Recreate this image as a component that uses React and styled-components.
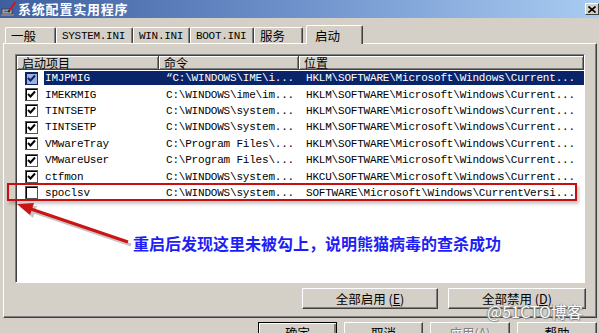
import React from "react";
import styled, { createGlobalStyle } from "styled-components";

const GlobalStyle = createGlobalStyle`
  html, body {
    margin: 0;
    padding: 0;
    background: #d4d0c8;
    overflow: hidden;
  }
  body {
    font-family: "Noto Sans CJK SC", "Liberation Sans", sans-serif;
  }
`;

const tabs = [
  { label: "一般", width: 51, mono: false },
  { label: "SYSTEM.INI", width: 77, mono: true },
  { label: "WIN.INI", width: 57, mono: true },
  { label: "BOOT.INI", width: 64, mono: true },
  { label: "服务", width: 49, mono: false },
  { label: "启动", width: 57, mono: false, active: true },
];

const HKLM = "HKLM\\SOFTWARE\\Microsoft\\Windows\\Current...";

const rows = [
  { name: "IMJPMIG", cmd: "\u201CC:\\WINDOWS\\IME\\i...", loc: HKLM, checked: true, selected: true },
  { name: "IMEKRMIG", cmd: "C:\\WINDOWS\\ime\\im...", loc: HKLM, checked: true },
  { name: "TINTSETP", cmd: "C:\\WINDOWS\\system...", loc: HKLM, checked: true },
  { name: "TINTSETP", cmd: "C:\\WINDOWS\\system...", loc: HKLM, checked: true },
  { name: "VMwareTray", cmd: "C:\\Program Files\\...", loc: HKLM, checked: true },
  { name: "VMwareUser", cmd: "C:\\Program Files\\...", loc: HKLM, checked: true },
  { name: "ctfmon", cmd: "C:\\WINDOWS\\system...", loc: "HKCU\\SOFTWARE\\Microsoft\\Windows\\Current...", checked: true },
  { name: "spoclsv", cmd: "C:\\WINDOWS\\system...", loc: "SOFTWARE\\Microsoft\\Windows\\CurrentVersi...", checked: false },
];

const App = () => {
  return (
    <Window>
      <GlobalStyle />
      <TitleBar>
        <svg width="16" height="16" viewBox="0 0 16 16">
          <rect x="1" y="8" width="10" height="5" fill="#c0c0c0" stroke="#404040" strokeWidth="1" />
          <rect x="2.5" y="9.5" width="7" height="2" fill="#4a6a9a" />
          <rect x="0" y="13" width="13" height="2" fill="#808080" />
          <line x1="14.5" y1="1" x2="8" y2="10" stroke="#d01818" strokeWidth="2" />
          <line x1="8.4" y1="9.4" x2="7.4" y2="11" stroke="#202020" strokeWidth="1.5" />
        </svg>
        <Title>系统配置实用程序</Title>
        <CloseButton>
          <svg width="8" height="7" viewBox="0 0 8 7">
            <path d="M0.5 0.5 L7.5 6.5 M7.5 0.5 L0.5 6.5" stroke="#000" strokeWidth="1.6" />
          </svg>
        </CloseButton>
      </TitleBar>

      <TabStrip>
        {tabs.map((t) => (
          <Tab key={t.label} width={t.width} active={t.active} mono={t.mono}>
            {t.label}
          </Tab>
        ))}
      </TabStrip>

      <Panel>
        <ListView>
          <HeaderRow>
            <HeaderCell>启动项目</HeaderCell>
            <HeaderCell>命令</HeaderCell>
            <HeaderCell>位置</HeaderCell>
          </HeaderRow>
          {rows.map((r, i) => (
            <Row key={i}>
              <CheckCell>
                <CheckBox selected={r.selected}>
                  {r.checked && (
                    <svg width="9" height="9" viewBox="0 0 9 9">
                      <polyline
                        points="1,4 3.5,6.5 8,1.5"
                        fill="none"
                        stroke={r.selected ? "#0a246a" : "#000"}
                        strokeWidth="2"
                      />
                    </svg>
                  )}
                </CheckBox>
              </CheckCell>
              <Cell selected={r.selected} pad={1}>{r.name}</Cell>
              <Cell selected={r.selected} pad={7}>{r.cmd}</Cell>
              <Cell selected={r.selected} pad={7}>{r.loc}</Cell>
            </Row>
          ))}
        </ListView>
        <ButtonRow>
          <Button width={136}>
            全部启用 (<u>E</u>)
          </Button>
          <Button width={138}>
            全部禁用 (<u>D</u>)
          </Button>
        </ButtonRow>
      </Panel>

      <BottomBar>
        <Button width={79} isDefault>确定</Button>
        <Button width={79}>取消</Button>
        <Button width={80} disabled>应用(<u>A</u>)</Button>
        <Button width={80}>帮助</Button>
      </BottomBar>

      {/* annotations drawn over the screenshot */}
      <RedBox />
      <Arrow width="140" height="60" viewBox="0 195 140 60">
        <g fill="#000" stroke="#000" opacity="0.22" transform="translate(3 3)">
          <line x1="128" y1="242" x2="28" y2="208" strokeWidth="3.2" />
          <polygon points="17,204 34,203 30,215" stroke="none" />
        </g>
        <g fill="#cc1414" stroke="#cc1414">
          <line x1="128" y1="242" x2="28" y2="208" strokeWidth="3.2" />
          <polygon points="17,204 34,203 30,215" stroke="none" />
        </g>
      </Arrow>
      <Note>重启后发现这里未被勾上，说明熊猫病毒的查杀成功</Note>
      <Watermark>@51CTO博客</Watermark>
    </Window>
  );
};

export default App;

const Window = styled.div`
  position: relative;
  width: 599px;
  height: 333px;
  overflow: hidden;
  background: #d4d0c8;
`;

const TitleBar = styled.div`
  height: 18px;
  box-sizing: border-box;
  display: flex;
  align-items: center;
  padding: 0 0 0 1px;
  background: linear-gradient(90deg, #3e5f9f 0%, #6f92cc 50%, #a9ccf2 100%);
`;

const Title = styled.span`
  margin-left: 1px;
  color: #fff;
  font-size: 13px;
  font-weight: 700;
  letter-spacing: 0.8px;
  line-height: 18px;
`;

const CloseButton = styled.div`
  margin-left: auto;
  width: 14px;
  height: 12px;
  box-sizing: border-box;
  display: flex;
  align-items: center;
  justify-content: center;
  background: #d4d0c8;
  border-top: 1px solid #fff;
  border-left: 1px solid #fff;
  border-right: 1px solid #404040;
  border-bottom: 1px solid #404040;
`;

const TabStrip = styled.div`
  height: 25px;
  display: flex;
  align-items: flex-end;
  padding-left: 5px;
  position: relative;
  z-index: 1;
`;

const Tab = styled.div`
  width: ${(p) => p.width}px;
  height: ${(p) => (p.active ? 19 : 16)}px;
  margin-bottom: ${(p) => (p.active ? -1 : 0)}px;
  margin-left: ${(p) => (p.active ? 3 : 0)}px;
  box-sizing: border-box;
  padding-left: ${(p) => (p.active ? 8 : 5)}px;
  display: flex;
  align-items: center;
  background: #d4d0c8;
  border-top: 1px solid #fff;
  border-left: 1px solid #fff;
  border-right: 1px solid #404040;
  border-radius: 2px 2px 0 0;
  box-shadow: inset -1px 0 #808080;
  font-family: ${(p) =>
    p.mono ? '"Liberation Mono", monospace' : '"Noto Sans CJK SC", sans-serif'};
  font-size: ${(p) => (p.mono ? 11 : 12.5)}px;
  letter-spacing: ${(p) => (p.mono ? -0.3 : 0)}px;
  color: #000;
`;

const Panel = styled.div`
  margin-left: 3px;
  width: 594px;
  height: 275px;
  box-sizing: border-box;
  padding: 10px 11px 0 11px;
  border-top: 1px solid #fff;
  border-left: 1px solid #fff;
  border-right: 1px solid #404040;
  border-bottom: 1px solid #404040;
  box-shadow: inset -1px -1px #808080;
`;

const ListView = styled.div`
  width: 570px;
  height: 229px;
  box-sizing: border-box;
  background: #fff;
  border: 1px solid;
  border-color: #808080 #fff #fff #808080;
  box-shadow: inset 1px 1px #404040;
  padding: 1px 0 0 1px;
  overflow: hidden;
`;

const HeaderRow = styled.div`
  display: grid;
  grid-template-columns: 142px 140px 285px;
  height: 14px;
`;

const HeaderCell = styled.div`
  box-sizing: border-box;
  height: 14px;
  padding-left: 5px;
  background: #d4d0c8;
  border-right: 1px solid #404040;
  border-bottom: 1px solid #404040;
  box-shadow: inset 1px 1px #fff, inset -1px -1px #808080;
  font-size: 12px;
  line-height: 13px;
  color: #000;
  white-space: nowrap;
`;

const Row = styled.div`
  display: grid;
  grid-template-columns: 27px 115px 140px 285px;
  height: 16.4px;
  align-items: center;
`;

const CheckCell = styled.div`
  padding-left: 8px;
  display: flex;
  align-items: center;
`;

const CheckBox = styled.div`
  width: 13px;
  height: 13px;
  box-sizing: border-box;
  display: flex;
  align-items: center;
  justify-content: center;
  border: 1px solid ${(p) => (p.selected ? "#0a246a" : "#555")};
  box-shadow: inset 1px 1px ${(p) => (p.selected ? "#0a246a" : "#000")};
  background: ${(p) => (p.selected ? "#9eb0dc" : "#fff")};
`;

const Cell = styled.div`
  height: 14px;
  line-height: 14px;
  box-sizing: border-box;
  padding-left: ${(p) => p.pad}px;
  background: ${(p) => (p.selected ? "#0a246a" : "transparent")};
  color: ${(p) => (p.selected ? "#fff" : "#000")};
  font-family: "Liberation Mono", monospace;
  font-size: 11px;
  letter-spacing: -0.2px;
  white-space: nowrap;
`;

const ButtonRow = styled.div`
  display: flex;
  justify-content: flex-end;
  gap: 10px;
  margin-top: 5px;
  margin-right: -1px;
`;

const Button = styled.div`
  width: ${(p) => p.width}px;
  height: 21px;
  box-sizing: border-box;
  display: flex;
  align-items: center;
  justify-content: center;
  background: #d4d0c8;
  border: 1px solid;
  border-color: ${(p) => (p.isDefault ? "#000" : "#fff #404040 #404040 #fff")};
  box-shadow: ${(p) =>
    p.isDefault
      ? "inset 1px 1px #fff, inset -2px -2px #808080"
      : "inset -1px -1px #808080"};
  font-size: 12.5px;
  color: ${(p) => (p.disabled ? "#808080" : "#000")};
  text-shadow: ${(p) => (p.disabled ? "1px 1px #fff" : "none")};
  u {
    text-decoration: underline;
  }
`;

const BottomBar = styled.div`
  display: flex;
  justify-content: flex-end;
  gap: 7px;
  padding-right: 2px;
  margin-top: 4px;
`;

const RedBox = styled.div`
  position: absolute;
  left: 7px;
  top: 183px;
  width: 570px;
  height: 18px;
  box-sizing: border-box;
  border: 2px solid #c80f0f;
  box-shadow: 2px 3px 3px rgba(0, 0, 0, 0.22);
`;

const Arrow = styled.svg`
  position: absolute;
  left: 0;
  top: 195px;
`;

const Note = styled.div`
  position: absolute;
  left: 133px;
  top: 233px;
  font-size: 16px;
  font-weight: 700;
  line-height: 20px;
  color: #1f1ff5;
  white-space: nowrap;
`;

const Watermark = styled.div`
  position: absolute;
  left: 487px;
  top: 302px;
  font-size: 16px;
  line-height: 18px;
  color: #fff;
  white-space: nowrap;
  text-shadow: 0 0 1px #666, 1px 1px 1px #888, -1px 0 1px #999;
`;
